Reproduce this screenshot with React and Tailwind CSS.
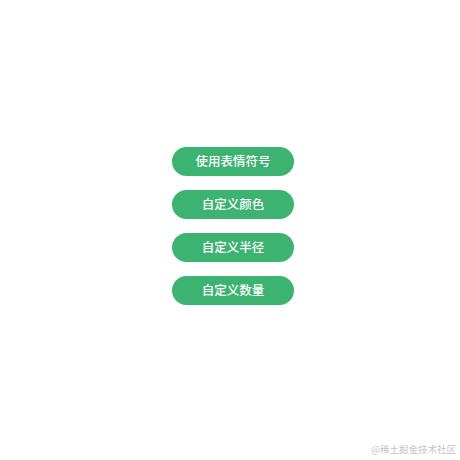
export default function App() {
  const labels = ["使用表情符号", "自定义颜色", "自定义半径", "自定义数量"];
  return (
    <div
      className="relative w-[460px] h-[460px] bg-white"
      style={{ fontFamily: '"Noto Sans CJK SC", "Noto Sans", sans-serif' }}
    >
      <div className="flex flex-col items-start pl-[172px] pt-[147px] gap-[14px]">
        {labels.map((l) => (
          <button
            key={l}
            className="w-[122px] h-[29px] rounded-full bg-[#3cb371] text-white text-[12.5px] font-medium flex items-center justify-center"
          >
            {l}
          </button>
        ))}
      </div>
      <div className="absolute right-[4px] bottom-[6px] text-[9.5px] text-[#c4c4c4] leading-none">
        @稀土掘金技术社区
      </div>
    </div>
  );
}
